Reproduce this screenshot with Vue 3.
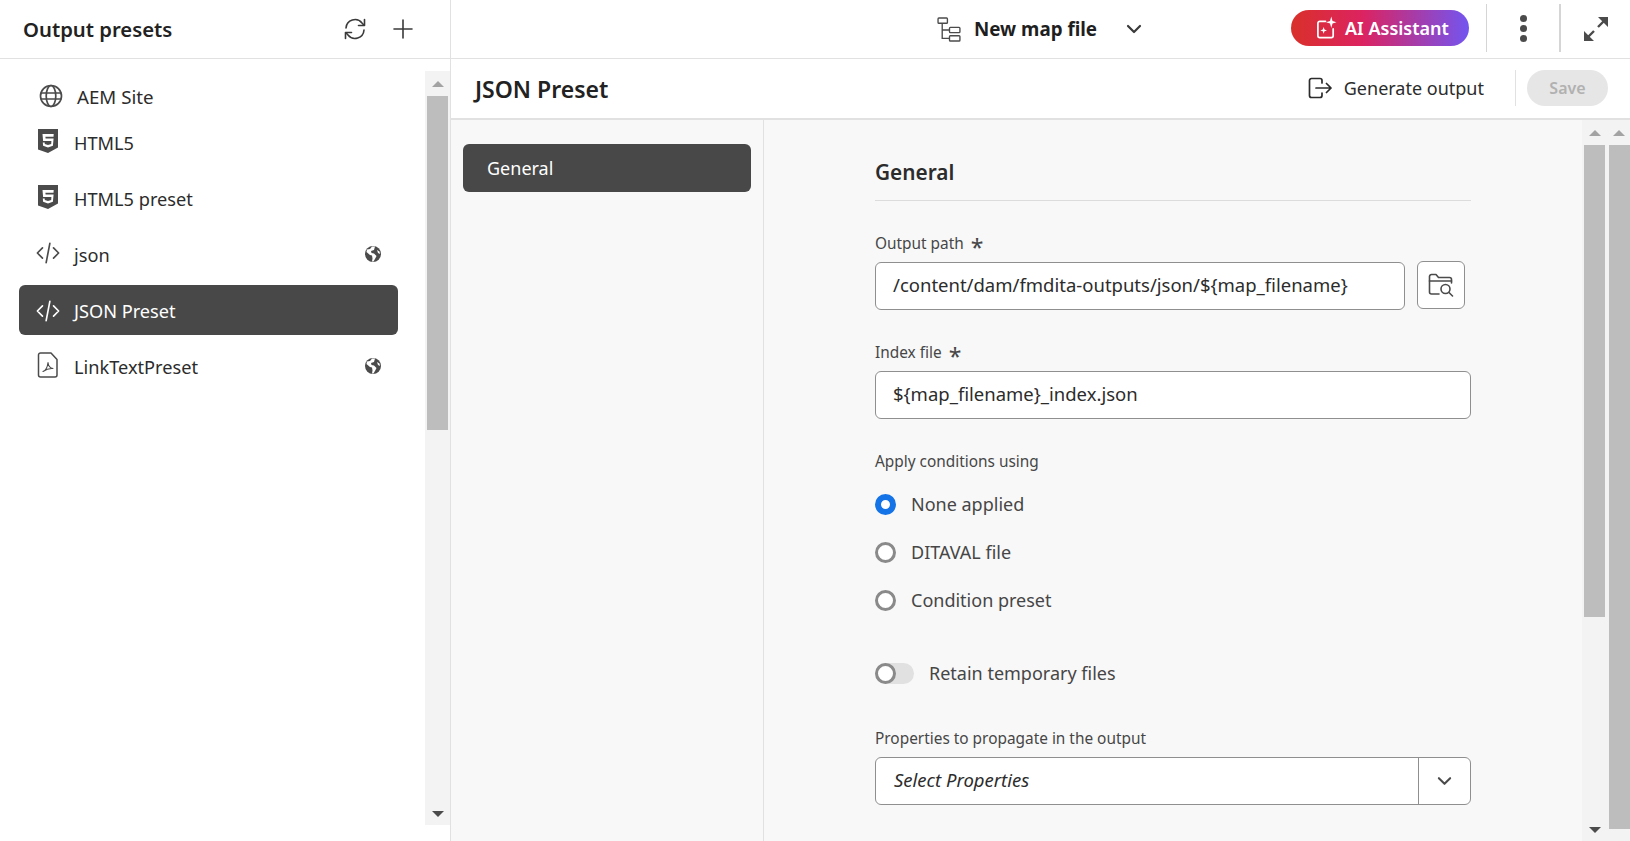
<template>
  <div class="app">
    <aside class="sidebar">
      <header class="side-head">
        <h1>Output presets</h1>
        <svg class="head-icon refresh" viewBox="0 0 24 24" fill="none" stroke="currentColor" stroke-width="1.6" stroke-linecap="round" stroke-linejoin="round">
          <path d="M3 11a9 9 0 0 1 16-5l2 2.2" />
          <path d="M21.5 2.5v6h-6" />
          <path d="M21 13a9 9 0 0 1-16 5l-2-2.2" />
          <path d="M2.500 21.500v-6h6" />
        </svg>
        <svg class="head-icon plus" viewBox="0 0 20 20" fill="none" stroke="currentColor" stroke-width="1.6" stroke-linecap="round">
          <path d="M10 1v18M1 10h18" />
        </svg>
      </header>
      <div class="side-body">
        <ul class="preset-list">
          <li v-for="p in presets" :key="p.name" class="row" :class="{ active: p.active, site: p.icon === 'site' }">
            <svg v-if="p.icon === 'site'" class="row-icon" viewBox="0 0 24 24" fill="none" stroke="currentColor" stroke-width="1.7">
              <circle cx="12" cy="12" r="10.500" />
              <ellipse cx="12" cy="12" rx="4.800" ry="10.500" />
              <path d="M1.500 9h21M1.500 15h21" />
            </svg>
            <svg v-else-if="p.icon === 'html'" class="row-icon" viewBox="1 0 22 24">
              <path fill="currentColor" fill-rule="evenodd" d="M2 0h20v18.500L12 24 2 20.500V0zm4.500 5l.6 7h8.300l-.2 3-3.200 1-3.200-1-.1-1.500H6.800l.3 3.300 4.900 1.700 4.900-1.700.7-7.300H9.600l-.2-1.800h8.100l.2-2.700H6.500z" />
            </svg>
            <svg v-else-if="p.icon === 'code'" class="row-icon" viewBox="0 0 26 24" fill="none" stroke="currentColor" stroke-width="1.800" stroke-linecap="round" stroke-linejoin="round">
              <path d="M7 6.500L1.500 12 7 17.500M19 6.500l5.500 5.500-5.500 5.500M15 1.500L11 22.500" />
            </svg>
            <svg v-else class="row-icon pdf" viewBox="0 0 24 26" fill="none" stroke="currentColor" stroke-width="1.500" stroke-linejoin="round">
              <path d="M4.500 1h10.500l6 6.500V23a2 2 0 0 1-2 2H4.500a2 2 0 0 1-2-2V3a2 2 0 0 1 2-2z" />
              <path stroke-width="1.100" d="M7 19.500c2.500-1 4.500-4.500 5-9 .3 3.500 2 5.500 5 6-3-.3-6.500.5-10 3z" />
            </svg>
            <span class="row-name">{{ p.name }}</span>
            <svg v-if="p.global" class="earth" viewBox="0 0 16 16">
              <circle cx="8" cy="8" r="8" fill="#4b4b4b" />
              <path fill="#fff" d="M7 .5L5 3 2 3.500 1.500 6 5 9l2 .5.500 3L7 15.500h1.500l2-3.500 1-2-2.500-2.500L6.500 7 6 5l3-1 1-3.500zM12 4l2.500 1.500L15 8l-2-1z" />
            </svg>
          </li>
        </ul>
        <div class="scrollbar side-scroll">
          <i class="arrow up"></i>
          <div class="thumb-slot"><div class="thumb side-thumb"></div></div>
          <i class="arrow down"></i>
        </div>
      </div>
    </aside>

    <main class="main">
      <div class="topbar">
        <svg class="tree" viewBox="0 0 24 24" fill="none" stroke="currentColor" stroke-width="1.300">
          <rect x="1" y="1" width="9" height="5" rx=".8" />
          <rect x="12" y="10" width="10" height="5" rx=".8" />
          <rect x="12" y="18" width="10" height="5" rx=".8" />
          <path d="M5 6v14.500h7M5 12.500h7" />
        </svg>
        <strong class="map-name">New map file</strong>
        <svg class="chev" viewBox="0 0 16 10" fill="none" stroke="currentColor" stroke-width="2.200" stroke-linecap="round" stroke-linejoin="round">
          <path d="M2 2l6 6 6-6" />
        </svg>
        <button class="ai-btn">
          <svg viewBox="0 0 22 24" fill="none" stroke="#fff" stroke-width="1.800" stroke-linecap="round" stroke-linejoin="round">
            <path d="M10 5H4a2 2 0 0 0-2 2v13a2 2 0 0 0 2 2h12a2 2 0 0 0 2-2v-7" />
            <path fill="#fff" stroke="none" d="M16 0l1.300 4.700L21.500 6l-4.200 1.300L16 12l-1.300-4.700L10.500 6l4.200-1.300zM8 11l.9 2.600 2.600.9-2.600.9L8 18l-.9-2.600-2.600-.9 2.600-.9z" />
          </svg>
          AI Assistant
        </button>
        <span class="bar-sep first"></span>
        <span class="dots"><i></i><i></i><i></i></span>
        <span class="bar-sep second"></span>
        <svg class="expand" viewBox="0 0 26 26" fill="none" stroke="#4b4b4b" stroke-width="2.400">
          <path d="M5 21l6-6M21 5l-6 6" />
          <path fill="#4b4b4b" stroke="none" d="M1 15v10h10zM25 1v10L15 1z" />
        </svg>
      </div>

      <div class="preset-head">
        <h2>JSON Preset</h2>
        <button class="gen-btn">
          <svg viewBox="0 0 24 22" fill="none" stroke="currentColor" stroke-width="1.700" stroke-linecap="round" stroke-linejoin="round">
            <path d="M14 6V3.500a2 2 0 0 0-2-2H3.500a2 2 0 0 0-2 2v15a2 2 0 0 0 2 2H12a2 2 0 0 0 2-2V16" />
            <path d="M8 11h15M18.500 6.500L23 11l-4.500 4.500" />
          </svg>
          Generate output
        </button>
        <span class="head-sep"></span>
        <button class="save-btn" disabled>Save</button>
      </div>

      <div class="content">
        <nav class="side-nav">
          <a class="nav-item">General</a>
        </nav>
        <section class="form-area">
          <div class="form">
            <h3>General</h3>

            <label class="field-label path-label">Output path <span class="star">*</span></label>
            <div class="path-row">
              <div class="input path-input">/content/dam/fmdita-outputs/json/${map_filename}</div>
              <button class="browse">
                <svg viewBox="0 0 26 24" fill="none" stroke="#4b4b4b" stroke-width="1.600" stroke-linecap="round" stroke-linejoin="round">
                  <path d="M11 21H3.500a2 2 0 0 1-2-2V3.500a2 2 0 0 1 2-2h4.500l2.500 3h11a2 2 0 0 1 2 2V10" />
                  <path d="M1.500 8h22" />
                  <circle cx="17.500" cy="16" r="4.500" />
                  <path d="M21 19.500l3.500 3.500" />
                </svg>
              </button>
            </div>

            <label class="field-label index-label">Index file <span class="star">*</span></label>
            <div class="input">${map_filename}_index.json</div>

            <label class="field-label cond-label">Apply conditions using</label>
            <div class="radios">
              <div v-for="r in radios" :key="r.label" class="radio">
                <span class="radio-dot" :class="{ on: r.on }"></span>
                {{ r.label }}
              </div>
            </div>

            <div class="toggle">
              <span class="track"><span class="knob"></span></span>
              Retain temporary files
            </div>

            <label class="field-label props-label">Properties to propagate in the output</label>
            <div class="select">
              <span class="select-text">Select Properties</span>
              <span class="select-btn">
                <svg viewBox="0 0 16 10" fill="none" stroke="#4b4b4b" stroke-width="2.200" stroke-linecap="round" stroke-linejoin="round">
                  <path d="M2 2l6 6 6-6" />
                </svg>
              </span>
            </div>
          </div>
        </section>
        <div class="scrollbar form-scroll">
          <i class="arrow up"></i>
          <div class="thumb-slot"><div class="thumb form-thumb"></div></div>
          <i class="arrow down"></i>
        </div>
        <div class="scrollbar page-scroll">
          <i class="arrow up"></i>
          <div class="thumb-slot"><div class="thumb page-thumb"></div></div>
        </div>
      </div>
    </main>
  </div>
</template>

<script setup>
const presets = [
  { name: 'AEM Site', icon: 'site' },
  { name: 'HTML5', icon: 'html' },
  { name: 'HTML5 preset', icon: 'html' },
  { name: 'json', icon: 'code', global: true },
  { name: 'JSON Preset', icon: 'code', active: true },
  { name: 'LinkTextPreset', icon: 'pdf', global: true }
]

const radios = [
  { label: 'None applied', on: true },
  { label: 'DITAVAL file' },
  { label: 'Condition preset' }
]
</script>

<style>
html,
body {
  margin: 0;
  overflow: hidden;
}
</style>

<style scoped>
.app {
  display: flex;
  width: 1630px;
  height: 841px;
  overflow: hidden;
  background: #fff;
  color: #2c2c2c;
  font-family: "Noto Sans", "Open Sans", sans-serif;
  font-size: 18px;
}

button {
  font-family: inherit;
  cursor: pointer;
}

/* sidebar */
.sidebar {
  width: 450px;
  flex: none;
  border-right: 1px solid #e1e1e1;
  display: flex;
  flex-direction: column;
}

.side-head {
  height: 58px;
  flex: none;
  display: flex;
  align-items: center;
  padding: 0 37px 0 23px;
  border-bottom: 1px solid #e1e1e1;
  color: #3a3a3a;
}

.side-head h1 {
  margin: 0 auto 0 0;
  font-size: 20.3px;
  font-weight: 600;
  color: #222;
}

.head-icon {
  flex: none;
}

.refresh {
  width: 24px;
  height: 24px;
  margin-right: 26px;
}

.plus {
  width: 20px;
  height: 20px;
}

.side-body {
  flex: 1;
  display: flex;
  min-height: 0;
  padding-bottom: 16px;
}

.preset-list {
  list-style: none;
  margin: 0;
  padding: 16px 0 0 19px;
  width: 379px;
  flex: none;
}

.row {
  height: 50px;
  margin-bottom: 6px;
  padding: 0 17px;
  display: flex;
  align-items: center;
  gap: 14px;
  border-radius: 6px;
  color: #4b4b4b;
}

.row-name {
  flex: 1;
  font-size: 18.2px;
  color: #2c2c2c;
}

.row.site {
  height: 43px;
  margin-bottom: 0;
}

.row.site .row-name {
  font-size: 18.7px;
}

.row.site .row-icon {
  margin-left: 3px;
  margin-top: -2px;
}

.row.active {
  background: #484848;
  color: #fff;
  margin-top: -1px;
  margin-bottom: 7px;
  padding-top: 2px;
  box-sizing: border-box;
}

.row.active .row-name {
  color: #fff;
}

.row-icon {
  width: 24px;
  height: 24px;
  flex: none;
  margin-top: -4px;
}

.row-icon.pdf {
  height: 26px;
}

.row.active .row-icon {
  margin-top: 0;
}

.earth {
  width: 16px;
  height: 16px;
  flex: none;
  margin-top: -2px;
}

/* scrollbars */
.scrollbar {
  display: flex;
  flex-direction: column;
  align-items: center;
  background: #f3f3f3;
}

.side-scroll {
  width: 25px;
  margin: 12px 0 0 27px;
}

.arrow {
  width: 0;
  height: 0;
  flex: none;
  border-left: 6px solid transparent;
  border-right: 6px solid transparent;
}

.arrow.up {
  border-bottom: 6px solid #a3a3a3;
  margin: 10px 0 9px;
}

.arrow.down {
  border-top: 6px solid #4b4b4b;
  margin: 8px 0;
}

.thumb-slot {
  flex: 1;
  width: 100%;
  min-height: 0;
  display: flex;
  justify-content: center;
}

.thumb {
  width: 21px;
  background: #bdbdbd;
}

.side-thumb {
  height: 334px;
}

/* top bars */
.main {
  flex: 1;
  min-width: 0;
  display: flex;
  flex-direction: column;
}

.topbar {
  height: 58px;
  flex: none;
  display: flex;
  align-items: center;
  padding: 0 21px 0 486px;
  border-bottom: 1px solid #e1e1e1;
}

.tree {
  width: 25px;
  height: 25px;
  flex: none;
  color: #4b4b4b;
}

.map-name {
  margin-left: 12px;
  font-size: 18.8px;
  font-weight: 700;
  color: #1f1f1f;
}

.chev {
  width: 16px;
  height: 10px;
  margin-left: 29px;
  color: #3a3a3a;
  flex: none;
}

.ai-btn {
  margin-left: auto;
  margin-right: 0;
  width: 178px;
  height: 36px;
  margin-top: -2px;
  border: 0;
  border-radius: 18px;
  padding: 0 0 0 25px;
  display: flex;
  align-items: center;
  gap: 8px;
  color: #fff;
  font-size: 18px;
  font-weight: 600;
  background: linear-gradient(90deg, #d9302a 0%, #dc2360 40%, #a63ca8 70%, #7355f0 100%);
}

.ai-btn svg {
  width: 21px;
  height: 24px;
  flex: none;
}

.bar-sep {
  width: 1px;
  height: 48px;
  background: #d5d5d5;
  flex: none;
  margin-top: -2px;
}

.bar-sep.first {
  margin-left: 17px;
}

.bar-sep.second {
  width: 2px;
  margin-right: 22px;
}

.dots {
  width: 72px;
  display: flex;
  flex-direction: column;
  align-items: center;
  gap: 3px;
  margin-top: -2px;
}

.dots i {
  width: 7px;
  height: 7px;
  border-radius: 50%;
  background: #4b4b4b;
}

.expand {
  width: 26px;
  height: 26px;
  flex: none;
  margin-top: -1px;
}

.preset-head {
  height: 57px;
  padding: 0 22px 2px 24px;
  flex: none;
  display: flex;
  align-items: center;
  border-bottom: 2px solid #e1e1e1;
}

.preset-head h2 {
  margin: 2px auto 0 0;
  font-size: 23px;
  font-weight: 600;
  color: #222;
}

.gen-btn {
  display: flex;
  align-items: center;
  gap: 12px;
  padding: 0;
  background: none;
  border: 0;
  color: #2c2c2c;
  font-size: 18px;
}

.gen-btn svg {
  width: 24px;
  height: 22px;
  flex: none;
}

.head-sep {
  width: 1px;
  height: 36px;
  margin: 0 11px 0 31px;
  background: #e1e1e1;
}

.save-btn {
  width: 81px;
  height: 36px;
  border: 0;
  border-radius: 18px;
  background: #e6e6e6;
  color: #b1b1b1;
  font-size: 16px;
  font-weight: 600;
}

/* content */
.content {
  flex: 1;
  min-height: 0;
  display: flex;
  background: #f8f8f8;
}

.side-nav {
  width: 313px;
  flex: none;
  box-sizing: border-box;
  padding: 24px 12px;
  border-right: 1px solid #e1e1e1;
}

.nav-item {
  display: flex;
  align-items: center;
  height: 48px;
  padding-left: 24px;
  border-radius: 6px;
  background: #484848;
  color: #fff;
}

.form-area {
  flex: 1;
  min-width: 0;
  padding-left: 111px;
}

.form {
  width: 596px;
}

.form h3 {
  margin: 0;
  height: 81px;
  box-sizing: border-box;
  padding-top: 34px;
  line-height: 36px;
  font-size: 20.8px;
  font-weight: 600;
  color: #2c2c2c;
  border-bottom: 1px solid #dcdcdc;
}

.field-label {
  display: flex;
  align-items: center;
  gap: 7px;
  height: 24px;
  font-size: 15.4px;
  color: #464646;
}

.star {
  font-size: 23px;
  height: 24px;
  line-height: 32px;
}

.path-label {
  margin-top: 30px;
  margin-bottom: 7px;
}

.index-label {
  margin-top: 30px;
  margin-bottom: 7px;
}

.cond-label {
  margin-top: 30px;
  margin-bottom: 15px;
}

.props-label {
  margin-top: 37px;
  margin-bottom: 7px;
}

.path-row {
  display: flex;
  gap: 12px;
}

.input {
  height: 48px;
  box-sizing: border-box;
  display: flex;
  align-items: center;
  padding: 0 0 3px 17px;
  background: #fff;
  border: 1px solid #8f8f8f;
  border-radius: 6px;
  color: #2c2c2c;
  font-size: 18.5px;
  white-space: nowrap;
}

.path-input {
  width: 530px;
  flex: none;
}

.browse {
  width: 48px;
  height: 48px;
  margin-top: -1px;
  flex: none;
  display: flex;
  align-items: center;
  justify-content: center;
  padding: 0;
  background: #fff;
  border: 1px solid #8f8f8f;
  border-radius: 6px;
}

.browse svg {
  width: 26px;
  height: 24px;
}

.radios {
  display: flex;
  flex-direction: column;
  gap: 16px;
}

.radio {
  display: flex;
  align-items: center;
  gap: 15px;
  height: 32px;
  color: #464646;
}

.radio-dot {
  width: 21px;
  height: 21px;
  flex: none;
  box-sizing: border-box;
  border-radius: 50%;
  border: 3px solid #8a8a8a;
  background: #fff;
}

.radio-dot.on {
  border: 6.500px solid #1473e6;
}

.toggle {
  display: flex;
  align-items: center;
  gap: 15px;
  height: 32px;
  margin-top: 41px;
  color: #464646;
}

.track {
  width: 39px;
  height: 21px;
  flex: none;
  display: block;
  border-radius: 11px;
  background: #e1e1e1;
}

.knob {
  display: block;
  width: 21px;
  height: 21px;
  box-sizing: border-box;
  border-radius: 50%;
  border: 3px solid #8a8a8a;
  background: #fff;
}

.select {
  height: 48px;
  box-sizing: border-box;
  display: flex;
  align-items: center;
  background: #fff;
  border: 1px solid #8f8f8f;
  border-radius: 6px;
}

.select-text {
  flex: 1;
  padding: 0 0 3px 18px;
  font-size: 18.5px;
  font-style: italic;
  color: #2c2c2c;
}

.select-btn {
  width: 51px;
  height: 100%;
  flex: none;
  display: flex;
  align-items: center;
  justify-content: center;
  border-left: 1px solid #8f8f8f;
}

.select-btn svg {
  width: 15px;
  height: 10px;
}

.form-scroll {
  width: 25px;
  flex: none;
}

.form-thumb {
  height: 472px;
}

.page-scroll {
  width: 23px;
  flex: none;
}

.page-scroll .thumb-slot {
  justify-content: flex-end;
}

.page-thumb {
  height: 684px;
}
</style>
